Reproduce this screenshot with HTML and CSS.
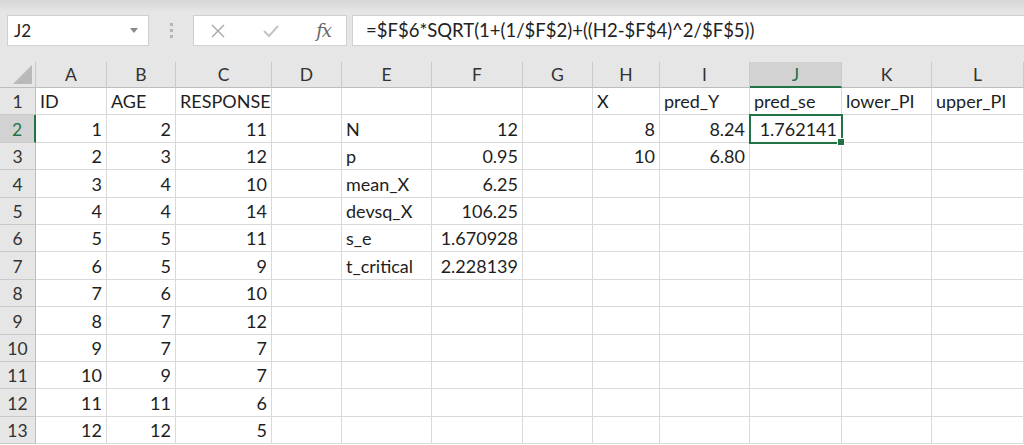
FILE: index.html
```html
<!DOCTYPE html>
<html>
<head>
<meta charset="utf-8">
<link rel="stylesheet" href="styles.css">
</head>
<body>
<div class="toolbar">
  <div class="namebox">
    <span class="name">J2</span>
    <svg class="caret" width="8" height="5" viewBox="0 0 8 5"><path d="M0 0 L8 0 L4 5 Z" fill="#8a8a8a"/></svg>
  </div>
  <div class="dots"><span></span><span></span><span></span></div>
  <div class="fxbox">
    <svg class="ico" width="16" height="16" viewBox="0 0 16 16"><path d="M2 2 L14 14 M14 2 L2 14" stroke="#a6a6a6" stroke-width="1.4" fill="none"/></svg>
    <svg class="ico" width="18" height="16" viewBox="0 0 18 16"><path d="M2 8 L7 13 L16 3" stroke="#c4c4c4" stroke-width="2" fill="none"/></svg>
    <span class="fx">fx</span>
  </div>
  <div class="formula">=$F$6*SQRT(1+(1/$F$2)+((H2-$F$4)^2/$F$5))</div>
</div>
<div class="sheet">
  <div class="corner"><div class="tri"></div></div>
  <div class="ch">A</div><div class="ch">B</div><div class="ch">C</div><div class="ch">D</div><div class="ch">E</div><div class="ch">F</div><div class="ch">G</div><div class="ch">H</div><div class="ch">I</div><div class="ch sel">J</div><div class="ch">K</div><div class="ch">L</div>

  <div class="rh">1</div>
  <div class="c">ID</div><div class="c">AGE</div><div class="c">RESPONSE</div><div class="c"></div><div class="c"></div><div class="c"></div><div class="c"></div><div class="c">X</div><div class="c">pred_Y</div><div class="c">pred_se</div><div class="c">lower_PI</div><div class="c">upper_PI</div>

  <div class="rh sel">2</div>
  <div class="c n">1</div><div class="c n">2</div><div class="c n">11</div><div class="c"></div><div class="c">N</div><div class="c n">12</div><div class="c"></div><div class="c n">8</div><div class="c n">8.24</div><div class="c n active">1.762141<span class="handle"></span></div><div class="c"></div><div class="c"></div>

  <div class="rh">3</div>
  <div class="c n">2</div><div class="c n">3</div><div class="c n">12</div><div class="c"></div><div class="c">p</div><div class="c n">0.95</div><div class="c"></div><div class="c n">10</div><div class="c n">6.80</div><div class="c"></div><div class="c"></div><div class="c"></div>

  <div class="rh">4</div>
  <div class="c n">3</div><div class="c n">4</div><div class="c n">10</div><div class="c"></div><div class="c">mean_X</div><div class="c n">6.25</div><div class="c"></div><div class="c"></div><div class="c"></div><div class="c"></div><div class="c"></div><div class="c"></div>

  <div class="rh">5</div>
  <div class="c n">4</div><div class="c n">4</div><div class="c n">14</div><div class="c"></div><div class="c">devsq_X</div><div class="c n">106.25</div><div class="c"></div><div class="c"></div><div class="c"></div><div class="c"></div><div class="c"></div><div class="c"></div>

  <div class="rh">6</div>
  <div class="c n">5</div><div class="c n">5</div><div class="c n">11</div><div class="c"></div><div class="c">s_e</div><div class="c n">1.670928</div><div class="c"></div><div class="c"></div><div class="c"></div><div class="c"></div><div class="c"></div><div class="c"></div>

  <div class="rh">7</div>
  <div class="c n">6</div><div class="c n">5</div><div class="c n">9</div><div class="c"></div><div class="c">t_critical</div><div class="c n">2.228139</div><div class="c"></div><div class="c"></div><div class="c"></div><div class="c"></div><div class="c"></div><div class="c"></div>

  <div class="rh">8</div>
  <div class="c n">7</div><div class="c n">6</div><div class="c n">10</div><div class="c"></div><div class="c"></div><div class="c"></div><div class="c"></div><div class="c"></div><div class="c"></div><div class="c"></div><div class="c"></div><div class="c"></div>

  <div class="rh">9</div>
  <div class="c n">8</div><div class="c n">7</div><div class="c n">12</div><div class="c"></div><div class="c"></div><div class="c"></div><div class="c"></div><div class="c"></div><div class="c"></div><div class="c"></div><div class="c"></div><div class="c"></div>

  <div class="rh">10</div>
  <div class="c n">9</div><div class="c n">7</div><div class="c n">7</div><div class="c"></div><div class="c"></div><div class="c"></div><div class="c"></div><div class="c"></div><div class="c"></div><div class="c"></div><div class="c"></div><div class="c"></div>

  <div class="rh">11</div>
  <div class="c n">10</div><div class="c n">9</div><div class="c n">7</div><div class="c"></div><div class="c"></div><div class="c"></div><div class="c"></div><div class="c"></div><div class="c"></div><div class="c"></div><div class="c"></div><div class="c"></div>

  <div class="rh">12</div>
  <div class="c n">11</div><div class="c n">11</div><div class="c n">6</div><div class="c"></div><div class="c"></div><div class="c"></div><div class="c"></div><div class="c"></div><div class="c"></div><div class="c"></div><div class="c"></div><div class="c"></div>

  <div class="rh">13</div>
  <div class="c n">12</div><div class="c n">12</div><div class="c n">5</div><div class="c"></div><div class="c"></div><div class="c"></div><div class="c"></div><div class="c"></div><div class="c"></div><div class="c"></div><div class="c"></div><div class="c"></div>
</div>
</body>
</html>
```
FILE: styles.css
```css
* { box-sizing: border-box; }
html, body { margin: 0; padding: 0; }
body {
  width: 1024px;
  height: 445px;
  overflow: hidden;
  background: #ffffff;
  font-family: Lato, "Open Sans", sans-serif;
  color: #1e1e1e;
}
.toolbar {
  height: 62px;
  background: linear-gradient(#d6d6d6 0px, #e6e6e6 12px, #e6e6e6 100%);
  display: flex;
  align-items: flex-start;
  padding: 15px 0 0 7px;
}
.namebox {
  width: 142px;
  height: 31px;
  background: #fff;
  border: 1px solid #d0d0d0;
  display: flex;
  align-items: center;
  justify-content: space-between;
  padding: 0 10px 0 6px;
}
.name { font-size: 17px; color: #222; }
.dots {
  width: 44px;
  height: 31px;
  display: flex;
  flex-direction: column;
  align-items: center;
  justify-content: center;
  gap: 3px;
}
.dots span { width: 3px; height: 3px; background: #b4b4b4; display: block; }
.fxbox {
  width: 154px;
  height: 31px;
  background: #fff;
  border: 1px solid #d0d0d0;
  display: flex;
  align-items: center;
  padding: 0 15px 0 16px;
  justify-content: space-between;
}
.fx {
  font-family: "DejaVu Serif", "Liberation Serif", serif;
  font-style: italic;
  font-size: 18px;
  color: #666;
  letter-spacing: -1px;
}
.formula {
  flex: 1;
  height: 31px;
  margin-left: 5px;
  background: #fff;
  border: 1px solid #d0d0d0;
  border-right: none;
  font-size: 18.5px;
  color: #222;
  padding: 3px 0 0 13px;
  white-space: nowrap;
}
.sheet {
  display: grid;
  grid-template-columns: 36px 71px 69px 96px 70px 90px 91px 70px 67px 90px 92px 90px 92px;
  grid-template-rows: 26px repeat(13, 27.4px);
}
.corner {
  background: #e6e6e6;
  border-right: 1px solid #c8c8c8;
  border-bottom: 1px solid #bdbdbd;
  position: relative;
}
.tri {
  position: absolute;
  right: 3px;
  bottom: 3px;
  width: 0; height: 0;
  border-left: 19px solid transparent;
  border-bottom: 19px solid #b9b9b9;
}
.ch {
  background: #e6e6e6;
  border-right: 1px solid #cacaca;
  border-bottom: 1px solid #bdbdbd;
  text-align: center;
  font-size: 17.5px;
  color: #333;
  line-height: 26px;
}
.ch.sel {
  background: #d2d2d2;
  color: #217346;
  border-bottom: 2px solid #217346;
}
.rh {
  background: #e6e6e6;
  border-right: 1px solid #bdbdbd;
  border-bottom: 1px solid #cacaca;
  font-size: 17.5px;
  color: #333;
  display: flex;
  align-items: flex-end;
  justify-content: center;
  padding-bottom: 2px;
}
.rh.sel {
  background: #d2d2d2;
  color: #217346;
  border-right: 2px solid #217346;
}
.c {
  border-right: 1px solid #d9d9d9;
  border-bottom: 1px solid #d9d9d9;
  font-size: 18px;
  color: #1e1e1e;
  display: flex;
  align-items: flex-end;
  padding: 0 4px 2px 4px;
  white-space: nowrap;
  overflow: visible;
}
.c.n { justify-content: flex-end; }
.c.active {
  outline: 2px solid #217346;
  outline-offset: -1px;
  position: relative;
  z-index: 2;
}
.handle {
  position: absolute;
  right: -4px;
  bottom: -4px;
  width: 6px;
  height: 6px;
  background: #217346;
  border: 1px solid #fff;
  box-sizing: content-box;
}
```
